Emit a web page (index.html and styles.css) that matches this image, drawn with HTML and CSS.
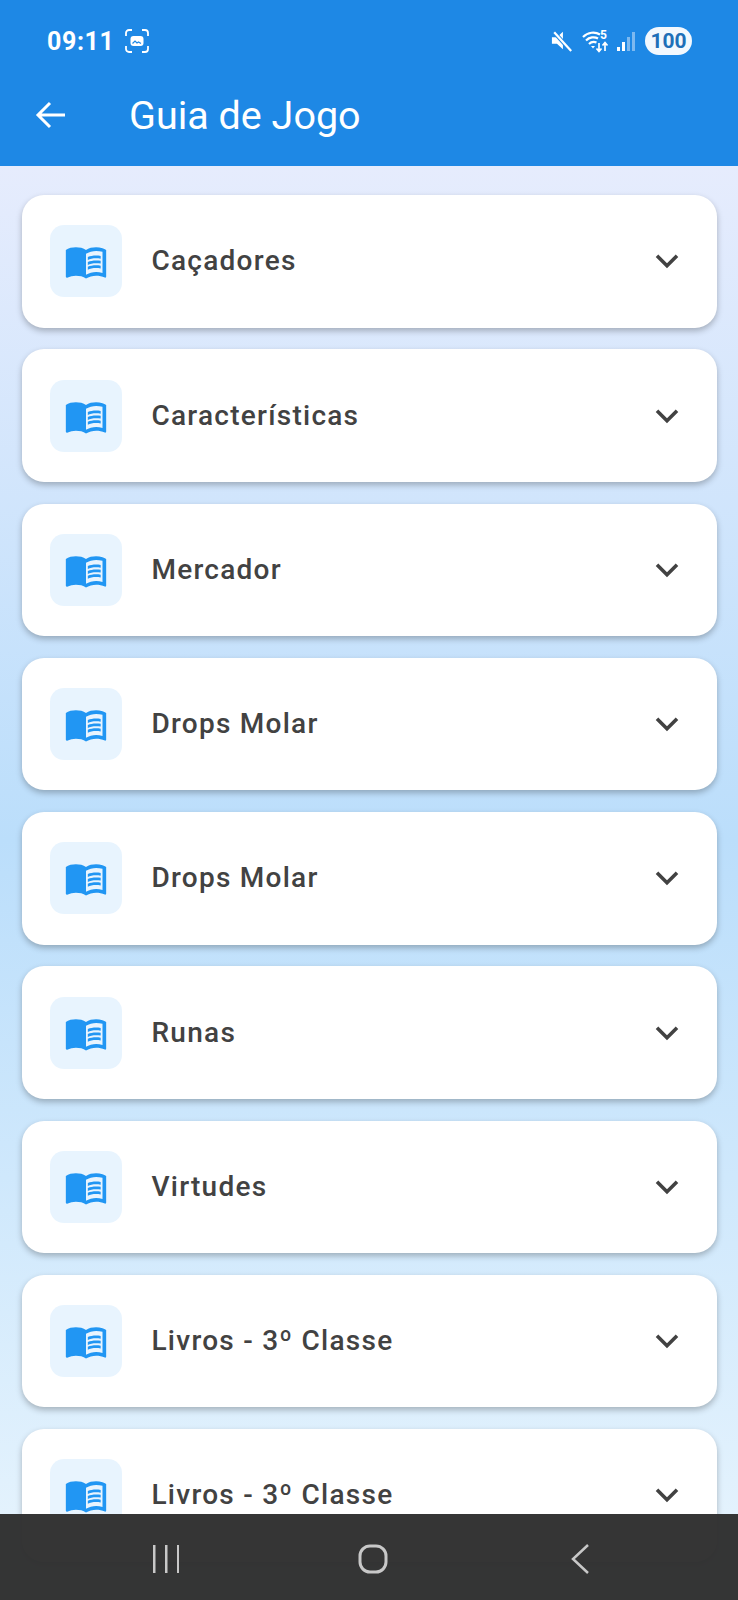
FILE: index.html
```html
<!DOCTYPE html>
<html lang="en">
<head>
    <meta charset="UTF-8">
    <meta name="viewport" content="width=device-width, initial-scale=1.0">
    <title>Guia de Jogo</title>
    <link rel="stylesheet" href="styles.css">
</head>
<body>
    <svg class="defs" width="0" height="0">
        <symbol id="book" viewBox="0 0 24 24">
            <path d="M21 5c-1.11-.35-2.33-.5-3.5-.5-1.95 0-4.05.4-5.5 1.5-1.45-1.1-3.55-1.5-5.5-1.5S2.45 4.9 1 6v14.65c0 .25.25.5.5.5.1 0 .15-.05.25-.05C3.1 20.45 5.05 20 6.5 20c1.95 0 4.05.4 5.5 1.5 1.35-.85 3.8-1.5 5.5-1.5 1.65 0 3.35.3 4.75 1.05.1.05.15.05.25.05.25 0 .5-.25.5-.5V6c-.6-.45-1.25-.75-2-1zm0 13.5c-1.1-.35-2.3-.5-3.5-.5-1.7 0-4.15.65-5.5 1.5V8c1.35-.85 3.8-1.5 5.5-1.5 1.2 0 2.4.15 3.5.5v11.5z"/>
            <path d="M17.5 10.5c.88 0 1.73.09 2.5.26V9.24c-.79-.15-1.64-.24-2.5-.24-1.7 0-3.24.29-4.5.83v1.66c1.13-.64 2.7-.99 4.5-.99zM13 12.49v1.66c1.13-.64 2.7-.99 4.5-.99.88 0 1.73.09 2.5.26V11.9c-.79-.15-1.64-.24-2.5-.24-1.7 0-3.24.3-4.5.83zM17.5 14.33c-1.7 0-3.24.29-4.5.83v1.66c1.13-.64 2.7-.99 4.5-.99.88 0 1.73.09 2.5.26v-1.52c-.79-.16-1.64-.24-2.5-.24z"/>
        </symbol>
        <symbol id="chevron" viewBox="0 0 24 24">
            <path d="M4.500 8l7.500 7.500L19.500 8" fill="none" stroke="currentColor" stroke-width="2.700"/>
        </symbol>
    </svg>

    <header class="appbar">
        <div class="statusbar">
            <div class="status-left">
                <span class="clock">09:11</span>
                <svg class="shot-icon" width="26" height="26" viewBox="0 0 26 26" fill="none" stroke="#fff" stroke-width="1.800">
                    <path d="M2 8V5a3 3 0 0 1 3-3h3M18 2h3a3 3 0 0 1 3 3v3M24 18v3a3 3 0 0 1-3 3h-3M8 24H5a3 3 0 0 1-3-3v-3"/>
                    <rect x="6.500" y="8" width="13" height="10" rx="3" fill="#fff" stroke="none"/>
                    <path d="M8.500 15.500l2.500-2.500 2 2 1.500-1 2.500 1.500" stroke="#1e88e5" stroke-width="1.200"/>
                </svg>
            </div>
            <div class="status-right">
                <svg class="mute-icon" width="22" height="22" viewBox="0 0 24 24">
                    <path d="M1 8h5.500L13 2v19l-6.500-6H1z" fill="#fff"/>
                    <path d="M3.500 2.500L22 23" stroke="#1e88e5" stroke-width="4.500"/>
                    <path d="M3.500 2.500L22 23" stroke="#fff" stroke-width="2.400"/>
                </svg>
                <svg class="wifi-icon" width="28" height="26" viewBox="0 0 28 26" fill="none" stroke="#fff">
                    <path d="M1 9c5-5 12-5.500 17-2.500M4 12.500c3.500-3.500 8.500-4 12-2M7 16c2-2 5-2.500 7.500-1.500" stroke-width="2.200"/>
                    <path d="M11 20.500l-2-2.500h4z" fill="#fff" stroke="none"/>
                    <path d="M17 15v8M14.500 20.500l2.500 3 2.500-3M23 23v-8M20.500 17.500l2.500-3 2.500 3" stroke-width="1.700"/>
                    <text x="18" y="11" class="wifi-five">5</text>
                </svg>
                <svg width="20" height="22" viewBox="0 0 20 22">
                    <rect x="1" y="17" width="3" height="4" fill="#fff"/>
                    <rect x="6" y="12" width="3" height="9" fill="#fff"/>
                    <rect x="11" y="7" width="3" height="14" fill="#7db9f0"/>
                    <rect x="16" y="2" width="3" height="19" fill="#7db9f0"/>
                </svg>
                <span class="battery">100</span>
            </div>
        </div>
        <div class="toolbar">
            <svg class="back-icon" width="32" height="32" viewBox="0 0 32 32" fill="none" stroke="#fff" stroke-width="3">
                <path d="M30 16H3M15 4L3 16l12 12"/>
            </svg>
            <h1 class="title">Guia de Jogo</h1>
        </div>
    </header>

    <main class="guide-list">
        <div class="card">
            <div class="card-icon"><svg><use href="#book"/></svg></div>
            <span class="card-label">Caçadores</span>
            <svg class="chevron"><use href="#chevron"/></svg>
        </div>
        <div class="card">
            <div class="card-icon"><svg><use href="#book"/></svg></div>
            <span class="card-label">Características</span>
            <svg class="chevron"><use href="#chevron"/></svg>
        </div>
        <div class="card">
            <div class="card-icon"><svg><use href="#book"/></svg></div>
            <span class="card-label">Mercador</span>
            <svg class="chevron"><use href="#chevron"/></svg>
        </div>
        <div class="card">
            <div class="card-icon"><svg><use href="#book"/></svg></div>
            <span class="card-label">Drops Molar</span>
            <svg class="chevron"><use href="#chevron"/></svg>
        </div>
        <div class="card">
            <div class="card-icon"><svg><use href="#book"/></svg></div>
            <span class="card-label">Drops Molar</span>
            <svg class="chevron"><use href="#chevron"/></svg>
        </div>
        <div class="card">
            <div class="card-icon"><svg><use href="#book"/></svg></div>
            <span class="card-label">Runas</span>
            <svg class="chevron"><use href="#chevron"/></svg>
        </div>
        <div class="card">
            <div class="card-icon"><svg><use href="#book"/></svg></div>
            <span class="card-label">Virtudes</span>
            <svg class="chevron"><use href="#chevron"/></svg>
        </div>
        <div class="card">
            <div class="card-icon"><svg><use href="#book"/></svg></div>
            <span class="card-label">Livros - 3º Classe</span>
            <svg class="chevron"><use href="#chevron"/></svg>
        </div>
        <div class="card">
            <div class="card-icon"><svg><use href="#book"/></svg></div>
            <span class="card-label">Livros - 3º Classe</span>
            <svg class="chevron"><use href="#chevron"/></svg>
        </div>
    </main>

    <nav class="navbar">
        <svg width="26" height="28" viewBox="0 0 26 28" fill="#c8c8c8">
            <rect x="0" y="0" width="2.500" height="28"/>
            <rect x="12" y="0" width="2.500" height="28"/>
            <rect x="24" y="0" width="2.500" height="28"/>
        </svg>
        <svg width="30" height="30" viewBox="0 0 30 30" fill="none" stroke="#c8c8c8" stroke-width="3">
            <rect x="2" y="2" width="26" height="26" rx="10"/>
        </svg>
        <svg width="20" height="30" viewBox="0 0 20 30" fill="none" stroke="#c8c8c8" stroke-width="2.500">
            <path d="M18 1L3 15l15 14"/>
        </svg>
    </nav>
</body>
</html>
```

FILE: styles.css
```css
html, body {
    margin: 0;
    padding: 0;
    height: 1600px;
    overflow: hidden;
}
body {
    position: relative;
    display: flex;
    flex-direction: column;
    font-family: Roboto, Arial, sans-serif;
    background-color: #bbdefb;
}
.defs {
    position: absolute;
}

/* top blue area */
.appbar {
    background-color: #1e88e5;
    color: #fff;
    height: 166px;
    flex-shrink: 0;
}
.statusbar {
    display: flex;
    justify-content: space-between;
    align-items: center;
    height: 82px;
    padding: 0 46px 0 47px;
}
.status-left {
    display: flex;
    align-items: center;
    gap: 10px;
}
.clock {
    font-size: 25px;
    font-weight: 700;
    letter-spacing: 0.6px;
}
.status-right {
    display: flex;
    align-items: center;
    gap: 6px;
}
.mute-icon {
    margin-right: 3px;
}
.wifi-five {
    font-family: Roboto, Arial, sans-serif;
    font-size: 12px;
    font-weight: 700;
    fill: #fff;
    stroke: none;
}
.battery {
    background-color: #f2f8fe;
    color: #1e6fb8;
    border-radius: 14px;
    width: 47px;
    height: 28px;
    line-height: 28px;
    text-align: center;
    font-size: 21px;
    font-weight: 700;
    margin-left: 3px;
}
.toolbar {
    display: flex;
    align-items: center;
    height: 66px;
    padding-left: 35px;
}
.back-icon {
    margin-right: 62px;
}
.title {
    margin: 0;
    font-size: 39.5px;
    font-weight: 400;
}

/* list of guide sections */
.guide-list {
    flex: 1;
    display: flex;
    flex-direction: column;
    gap: 21.75px;
    padding: 29px 21.5px 0 22px;
    background-color: #e3f2fd;
    background-image: linear-gradient(to bottom, #e6ecfd, #bbdefb 50%, #e3f2fd);
    background-size: 100% 1348px;
    background-repeat: no-repeat;
    overflow: hidden;
}
.card {
    display: flex;
    align-items: center;
    flex-shrink: 0;
    height: 132.5px;
    padding: 0 34px 0 28px;
    background-color: #fff;
    border-radius: 22px;
    box-shadow: 0 3px 6px rgba(0, 0, 0, 0.26);
}
.card-icon {
    display: flex;
    justify-content: center;
    align-items: center;
    width: 72px;
    height: 72px;
    border-radius: 14px;
    background-color: rgba(33, 150, 243, 0.1);
    margin-right: 29.5px;
}
.card-icon svg {
    width: 44px;
    height: 44px;
    fill: #2196f3;
}
.card-label {
    flex: 1;
    font-size: 28px;
    font-weight: 550;
    letter-spacing: 1.25px;
    line-height: 30px;
    color: #424242;
}
.chevron {
    width: 32px;
    height: 32px;
    color: #424242;
}

/* android buttons, drawn over the list */
.navbar {
    position: absolute;
    left: 0;
    right: 0;
    bottom: 0;
    height: 82px;
    display: grid;
    grid-template-columns: repeat(3, 207px);
    justify-items: center;
    align-items: center;
    padding: 4px 0 0 62.5px;
    background-color: rgba(46, 46, 46, 0.97);
}
```
